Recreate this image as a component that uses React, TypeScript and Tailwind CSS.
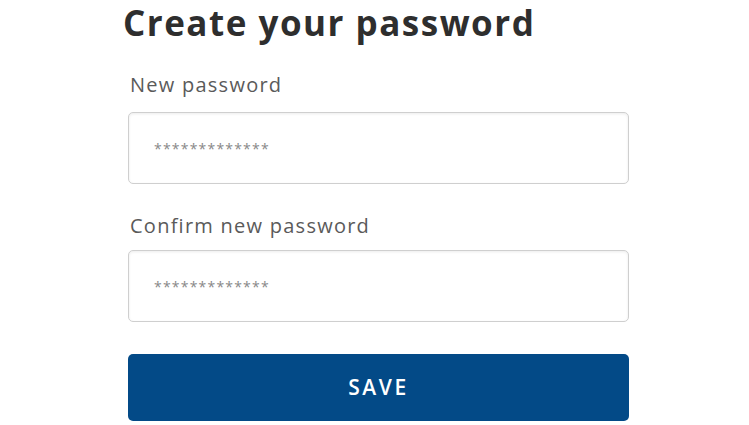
import { useState } from 'react';

export default function App() {
  const [password, setPassword] = useState('*************');
  const [confirm, setConfirm] = useState('*************');

  return (
    <div className="min-h-[425px] w-full bg-white font-['Open_Sans',sans-serif]">
      <div className="ml-[128px] w-[501px]">
        <h1 className="-ml-[5px] text-[35px] font-bold leading-[46px] tracking-[1.5px] text-[#2e2e2e]">
          Create your password
        </h1>

        <label className="mt-[27px] block pl-[2px] text-[20px] leading-[24px] tracking-[1.25px] text-[#5a5a5a]">
          New password
        </label>
        <input
          type="text"
          value={password}
          onChange={(e) => setPassword(e.target.value)}
          className="mt-[15px] block h-[72px] w-full rounded-[5px] border border-[#cfcfcf] bg-white px-[25px] text-[14px] tracking-[1.2px] text-[#888] shadow-[inset_0_1px_3px_rgba(0,0,0,0.08)] outline-none"
        />

        <label className="mt-[30px] block pl-[2px] text-[20px] leading-[24px] tracking-[1.25px] text-[#5a5a5a]">
          Confirm new password
        </label>
        <input
          type="text"
          value={confirm}
          onChange={(e) => setConfirm(e.target.value)}
          className="mt-[12px] block h-[72px] w-full rounded-[5px] border border-[#cfcfcf] bg-white px-[25px] text-[14px] tracking-[1.2px] text-[#888] shadow-[inset_0_1px_3px_rgba(0,0,0,0.08)] outline-none"
        />

        <button className="mt-[32px] block h-[67px] w-full rounded-[5px] bg-[#034a87] text-[21px] font-semibold tracking-[2.6px] text-white">
          SAVE
        </button>
      </div>
    </div>
  );
}
